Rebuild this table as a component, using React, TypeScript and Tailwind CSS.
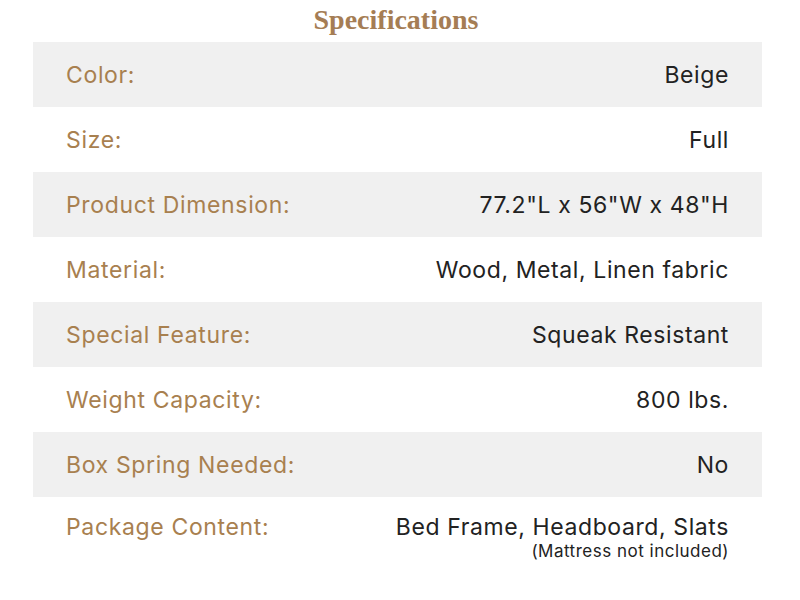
import React from 'react'

interface SpecRow {
  label: string
  value: string
  note?: string
}

const specs: SpecRow[] = [
  { label: 'Color:', value: 'Beige' },
  { label: 'Size:', value: 'Full' },
  { label: 'Product Dimension:', value: '77.2"L x 56"W x 48"H' },
  { label: 'Material:', value: 'Wood, Metal, Linen fabric' },
  { label: 'Special Feature:', value: 'Squeak Resistant' },
  { label: 'Weight Capacity:', value: '800 lbs.' },
  { label: 'Box Spring Needed:', value: 'No' },
  { label: 'Package Content:', value: 'Bed Frame, Headboard, Slats', note: '(Mattress not included)' },
]

export default function App() {
  return (
    <div className="w-[800px] h-[600px] bg-white overflow-hidden" style={{ fontFamily: 'Inter, "Open Sans", sans-serif' }}>
      <h2
        className="h-[42px] pt-[3px] pr-[8px] text-center text-[28px] font-bold text-[#a57d54] leading-[34px]"
        style={{ fontFamily: '"Liberation Serif", serif' }}
      >
        Specifications
      </h2>
      <div className="mx-[33px] w-[729px]">
        {specs.map((row, i) => (
          <div
            key={i}
            className={`flex justify-between px-[33px] ${i % 2 === 0 ? 'bg-[#f0f0f0]' : 'bg-white'} ${row.note ? 'h-[68px] items-start pt-[16px]' : 'h-[65px] items-center'}`}
          >
            <span className="text-[23px] text-[#a8804f] tracking-[0.65px] leading-[28px]">{row.label}</span>
            <div className="flex flex-col items-end">
              <span className="text-[23px] text-[#222222] tracking-[0.6px] leading-[28px]">{row.value}</span>
              {row.note && (
                <span className="text-[17px] text-[#222222] tracking-[0.5px] leading-[20px]">{row.note}</span>
              )}
            </div>
          </div>
        ))}
      </div>
    </div>
  )
}
